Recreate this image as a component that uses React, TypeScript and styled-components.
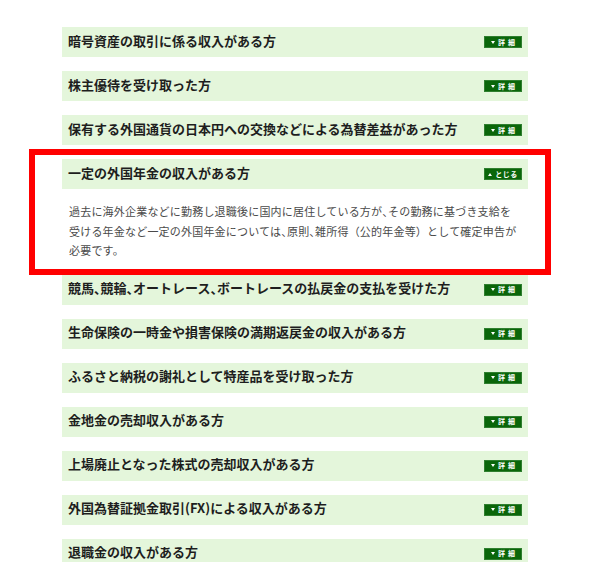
import { FunctionComponent, ReactNode } from "react";
import styled, { createGlobalStyle } from "styled-components";

const GlobalStyle = createGlobalStyle`
  html, body {
    margin: 0;
    padding: 0;
    background: #ffffff;
  }
  body {
    font-family: "Noto Sans CJK JP", "Noto Sans", sans-serif;
  }
`;

type Item = {
  title: string;
  open?: boolean;
  body?: string[];
};

const items: Item[] = [
  { title: "暗号資産の取引に係る収入がある方" },
  { title: "株主優待を受け取った方" },
  { title: "保有する外国通貨の日本円への交換などによる為替差益があった方" },
  {
    title: "一定の外国年金の収入がある方",
    open: true,
    body: [
      "過去に海外企業などに勤務し退職後に国内に居住している方が、その勤務に基づき支給を",
      "受ける年金など一定の外国年金については、原則、雑所得（公的年金等）として確定申告が",
      "必要です。",
    ],
  },
  { title: "競馬、競輪、オートレース、ボートレースの払戻金の支払を受けた方" },
  { title: "生命保険の一時金や損害保険の満期返戻金の収入がある方" },
  { title: "ふるさと納税の謝礼として特産品を受け取った方" },
  { title: "金地金の売却収入がある方" },
  { title: "上場廃止となった株式の売却収入がある方" },
  { title: "外国為替証拠金取引(FX)による収入がある方" },
  { title: "退職金の収入がある方" },
];

const Frame = styled.div`
  width: 600px;
  height: 562px;
  overflow: hidden;
  padding: 27px 0 0 62px;
  box-sizing: border-box;
`;

const List = styled.ul`
  list-style: none;
  margin: 0;
  padding: 0;
  width: 466px;
  display: flex;
  flex-direction: column;
  gap: 14px;
`;

const Entry = styled.li`
  position: relative;
`;

const Header = styled.div`
  height: 30px;
  background: #e4f6db;
  display: flex;
  align-items: center;
  justify-content: space-between;
  padding: 0 6px 0 6px;
  box-sizing: border-box;
`;

const Title = styled.h3`
  margin: 0;
  font-size: 13px;
  font-weight: 700;
  color: #1e1e1e;
  line-height: 1;
  padding-bottom: 4px;
`;

// 読点は半角幅に詰める
const Punct = styled.span`
  font-feature-settings: "halt";
`;

const tight = (text: string): ReactNode[] =>
  text
    .split(/(、)/)
    .map((part, i) => (part === "、" ? <Punct key={i}>{part}</Punct> : part));

const Toggle = styled.span`
  width: 38px;
  height: 12px;
  background: #0a660a;
  border: 1px solid #2f7f2f;
  box-sizing: border-box;
  display: flex;
  align-items: center;
  justify-content: center;
  gap: 3px;
  color: #ffffff;
  font-size: 7px;
  font-weight: 700;
  line-height: 1;
`;

const Arrow = styled.span<{ $up?: boolean }>`
  width: 0;
  height: 0;
  border-left: 2.5px solid transparent;
  border-right: 2.5px solid transparent;
  ${({ $up }) =>
    $up ? "border-bottom: 3px solid #ffffff;" : "border-top: 3px solid #ffffff;"}
`;

const Label = styled.span<{ $wide?: boolean }>`
  letter-spacing: ${({ $wide }) => ($wide ? "3px" : "0.5px")};
  margin-right: ${({ $wide }) => ($wide ? "-3px" : "0")};
`;

const Body = styled.div`
  padding: 13px 6px 0 7px;
  font-size: 11px;
  letter-spacing: 0.2px;
  line-height: 19.5px;
  color: #4a4a4a;
  white-space: nowrap;
`;

const Highlight = styled.div`
  position: absolute;
  top: -10px;
  left: -33px;
  right: -23px;
  bottom: -14px;
  border: 6px solid #ff0000;
  pointer-events: none;
`;

const App: FunctionComponent = () => {
  return (
    <Frame>
      <GlobalStyle />
      <List>
        {items.map((item) => (
          <Entry key={item.title}>
            <Header>
              <Title>{tight(item.title)}</Title>
              <Toggle>
                <Arrow $up={item.open} />
                {item.open ? <Label>とじる</Label> : <Label $wide>詳細</Label>}
              </Toggle>
            </Header>
            {item.open && item.body && (
              <Body>
                {item.body.map((line, i) => (
                  <span key={i}>
                    {tight(line)}
                    {i < item.body!.length - 1 && <br />}
                  </span>
                ))}
              </Body>
            )}
            {item.open && <Highlight />}
          </Entry>
        ))}
      </List>
    </Frame>
  );
};

export default App;
